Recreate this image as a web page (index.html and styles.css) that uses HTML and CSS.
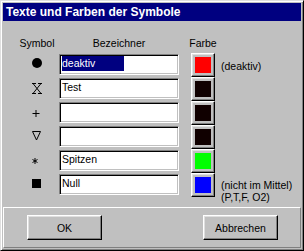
FILE: index.html
```html
<html>
	<head>
		<meta charset="utf-8" />
		<title>Texte und Farben der Symbole</title>
		<link rel="stylesheet" href="styles.css">
	</head>
	<body>
		<div class="window">
			<div class="titlebar">Texte und Farben der Symbole</div>
			<div class="content">
				<div class="grid">
					<div class="head sym-head">Symbol</div>
					<div class="head field-head">Bezeichner</div>
					<div class="head color-head">Farbe</div>
					<div></div>

					<div class="sym"><svg width="14" height="14"><circle cx="7" cy="7" r="5" fill="#000"/></svg></div>
					<div class="field"><span class="sel">deaktiv</span></div>
					<div class="swatch"><div style="background-color: #ff0000;"></div></div>
					<div class="note">(deaktiv)</div>

					<div class="sym"><svg width="14" height="14"><path d="M2 3.5h4M8 3.5h4M3 3.5l8 10M11 3.5l-8 10M2 13.5h4M8 13.5h4" stroke="#000" fill="none"/></svg></div>
					<div class="field">Test</div>
					<div class="swatch"><div style="background-color: #100000;"></div></div>
					<div></div>

					<div class="sym"><svg width="14" height="14"><path d="M6 6v7M2.5 9.5h7" stroke="#000" fill="none"/></svg></div>
					<div class="field"></div>
					<div class="swatch"><div style="background-color: #100000;"></div></div>
					<div></div>

					<div class="sym"><svg width="14" height="14"><path d="M2.5 3.5h8l-4 8.5z" stroke="#000" fill="none"/></svg></div>
					<div class="field"></div>
					<div class="swatch"><div style="background-color: #100000;"></div></div>
					<div></div>

					<div class="sym"><svg width="14" height="14"><path d="M5 6v6M2.5 7.5l5 3M7.5 7.5l-5 3" stroke="#000" fill="none"/></svg></div>
					<div class="field">Spitzen</div>
					<div class="swatch"><div style="background-color: #00ff00;"></div></div>
					<div></div>

					<div class="sym"><svg width="14" height="14"><rect x="2" y="3" width="9" height="9" fill="#000"/></svg></div>
					<div class="field">Null</div>
					<div class="swatch"><div style="background-color: #0000ff;"></div></div>
					<div class="note note-two">(nicht im Mittel)<br>(P,T,F, O2)</div>
				</div>
			</div>
			<div class="panel">
				<button class="btn" type="button">OK</button>
				<button class="btn" type="button">Abbrechen</button>
			</div>
		</div>
	</body>
</html>
```

FILE: styles.css
```css
body { margin: 0; background-color: #c0c0c0; font-family: "Liberation Sans", Arial, sans-serif; font-size: 10.5px; color: #000000; }

.window {
	width: 304px; height: 251px; box-sizing: border-box;
	border: 1px solid; border-color: #dfdfdf #000000 #000000 #dfdfdf;
	box-shadow: inset 1px 1px #ffffff, inset -1px -1px #808080;
	padding: 2px;
	display: flex; flex-direction: column;
	background-color: #c0c0c0;
}
.titlebar { height: 18px; line-height: 18px; background-color: #000080; color: #ffffff; font-weight: bold; font-size: 12px; padding-left: 3px; white-space: nowrap; }

.content { height: 186px; box-sizing: border-box; padding: 16px 0 0 15px; }
.grid {
	display: grid;
	grid-template-columns: 41px 132px 30px 1fr;
	grid-template-rows: 16px;
	grid-auto-rows: 24px;
}
.head { line-height: 13px; white-space: nowrap; }
.sym-head { text-align: center; padding-right: 3px; }
.field-head { width: 120px; text-align: center; }
.color-head { width: 24px; display: flex; justify-content: center; }

.sym { display: flex; justify-content: center; align-items: flex-start; padding-top: 3px; padding-right: 3px; }
.sym svg { display: block; }

.field {
	width: 120px; height: 21px; box-sizing: border-box; margin-top: 1px;
	background-color: #ffffff;
	border: 1px solid; border-color: #808080 #ffffff #ffffff #808080;
	box-shadow: inset 1px 1px #000000, inset -1px -1px #c0c0c0;
	padding: 1px 2px; line-height: 15px; white-space: nowrap; overflow: hidden;
}
.sel { display: inline-block; width: 62px; background-color: #000080; color: #ffffff; }

.swatch {
	width: 24px; height: 24px; box-sizing: border-box;
	border: 1px solid; border-color: #ffffff #000000 #000000 #ffffff;
	box-shadow: inset -1px -1px #808080, inset 1px 1px #dfdfdf;
	padding: 3px;
}
.swatch div { width: 16px; height: 16px; }

.note { line-height: 24px; padding-top: 1px; white-space: nowrap; }
.note-two { line-height: 12px; padding-top: 6px; }

.panel {
	flex: 1;
	border: 1px solid; border-color: #ffffff #808080 #808080 #ffffff;
	display: flex; justify-content: space-between; align-items: flex-start;
	padding: 7px 22px 0 23px;
}
.btn {
	width: 75px; height: 25px; box-sizing: border-box;
	background-color: #c0c0c0; color: #000000;
	border: 1px solid; border-color: #ffffff #000000 #000000 #ffffff;
	box-shadow: inset -1px -1px #808080, inset 1px 1px #dfdfdf;
	font: inherit; padding: 0;
}
```
